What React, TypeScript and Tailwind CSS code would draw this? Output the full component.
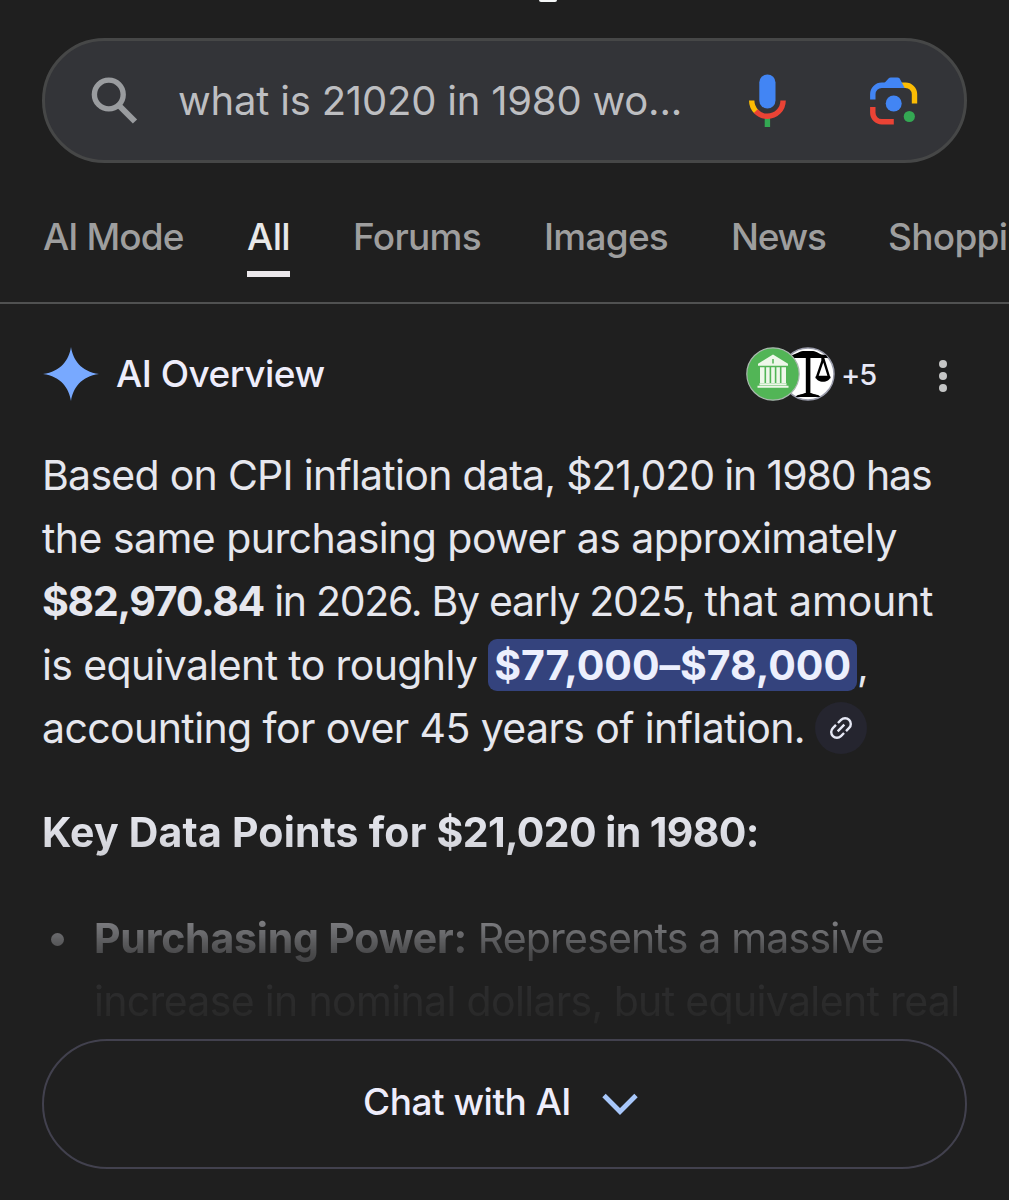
import React from 'react';

const TABS = [
    { label: 'AI Mode', className: 'w-[141px] tracking-[-0.9px]' },
    { label: 'All', className: 'w-[43px] tracking-[-0.6px]', active: true },
    { label: 'Forums', className: 'w-[128px] tracking-[-0.7px]' },
    { label: 'Images', className: 'w-[124px] tracking-[-0.75px]' },
    { label: 'News', className: 'w-[94px] tracking-[-1.3px]' },
    { label: 'Shopping', className: 'tracking-[-0.7px]' },
];

const SearchIcon: React.FC = () => (
    <svg className="h-12 w-12 shrink-0" viewBox="0 0 48 48" fill="none" stroke="#9a9c9f">
        <circle cx="18.8" cy="17.5" r="14.4" strokeWidth="5.4" />
        <path d="M28.5 28 45 44.5" strokeWidth="6" />
    </svg>
);

const MicIcon: React.FC = () => (
    <svg className="h-[54px] w-[38px] shrink-0" viewBox="0 0 38 54" fill="none">
        <rect x="11.3" y="0.5" width="16.2" height="34" rx="8.1" fill="#4285f4" />
        <path d="M19.4 44v9" stroke="#34a853" strokeWidth="5.4" />
        <path d="M3.7 26.500c0 4.600 1.800 8.300 4.600 11.100" stroke="#fbbc04" strokeWidth="5.4" />
        <path d="M7.800 37.100c3 3.200 7 5.200 11.600 5.200 8.700 0 15.700-7 15.700-15.800" stroke="#ea4335" strokeWidth="5.4" />
    </svg>
);

const LensIcon: React.FC = () => (
    <svg className="h-12 w-12 shrink-0" viewBox="0 0 48 48" fill="none">
        <path d="M30 8.300h5.500a9 9 0 0 1 9 9v9.200" stroke="#fbbc04" strokeWidth="5.4" />
        <path d="M2.800 22.500v-5.200a9 9 0 0 1 9-9H31" stroke="#4285f4" strokeWidth="5.4" />
        <path d="M13.500 7 18.500 1.500Q19.400.500 20.800.500h6.600q1.400 0 2.300 1L34.700 11H14Z" fill="#4285f4" />
        <path d="M2.800 30v5.700a9 9 0 0 0 9 9h12" stroke="#ea4335" strokeWidth="5.4" />
        <circle cx="23.7" cy="26.5" r="8" fill="#4285f4" />
        <circle cx="39.3" cy="39.5" r="5.6" fill="#34a853" />
    </svg>
);

const SparkIcon: React.FC = () => (
    <svg className="h-[54px] w-[56px] shrink-0" viewBox="0 0 56 54">
        <path
            d="M28 0C30 13 38 24.500 56 27 38 29.500 30 41 28 54 26 41 18 29.500 0 27 18 24.500 26 13 28 0Z"
            fill="#78a9ff"
        />
    </svg>
);

const BankLogo: React.FC = () => (
    <svg className="h-[54px] w-[54px]" viewBox="0 0 54 54">
        <circle cx="27" cy="27" r="26.2" fill="#52b556" stroke="#a9b8ae" strokeWidth="1.2" />
        <g fill="#eef7e9">
            <path d="M12 16.800 27 7.500l15 9.300v2H12z" />
            <path d="M14 20.300h4.500V36H14zM20.100 20.300h3.500V36h-3.500zM25.200 20.300h3.600V36h-3.600zM30.400 20.300h3.500V36h-3.500zM35.500 20.300H40V36h-4.500z" />
            <path d="M13.500 36.300h27v2h-27zM11.500 38.700h31v2h-31z" />
        </g>
        <path d="M27 12v4.500" stroke="#52b556" strokeWidth="1.5" />
    </svg>
);

const ScalesLogo: React.FC = () => (
    <svg className="h-[54px] w-[54px]" viewBox="0 0 54 54">
        <circle cx="27" cy="27" r="26" fill="#fff" stroke="#9a9cab" strokeWidth="1.5" />
        <path d="M8 8.500C14 8.500 18 4 22 4h10c4 0 7 4.500 13 4l2 3H8z" fill="#000" />
        <path d="M24.800 9h4.600v38h-4.600z" fill="#000" />
        <path d="M15 50c0-2.500 6-2.500 9-4h6c3 1.500 9 1.500 9 4z" fill="#000" />
        <path d="M41.500 9v5L36 30h12z" fill="none" stroke="#000" strokeWidth="2.4" />
        <path d="M34.500 29.500h15c-1 7-14 7-15 0z" fill="#000" />
    </svg>
);

const LinkIcon: React.FC = () => (
    <svg className="h-[28px] w-[28px] -rotate-45" viewBox="0 0 28 28" fill="none" stroke="#e6e8f5" strokeWidth="2.4">
        <path d="M12.600 8.300H8.200a5.700 5.700 0 0 0 0 11.400h4.400M15.400 8.300h4.400a5.700 5.700 0 0 1 0 11.400h-4.400M9.300 14h9.400" />
    </svg>
);

const SearchBar: React.FC = () => (
    <div className="mx-[42px] mt-9 flex h-[125px] items-center rounded-full border-[3px] border-[#464747] bg-[#333438] pr-[46px] pl-[45px]">
        <SearchIcon />
        <span className="ml-[40px] flex-1 pt-px text-[40px] whitespace-nowrap tracking-[-0.2px] text-[#bdbec1]">
            what is 21020 in 1980 wo...
        </span>
        <MicIcon />
        <div className="ml-[84px]">
            <LensIcon />
        </div>
    </div>
);

const Tabs: React.FC = () => (
    <nav className="mt-[48px] flex h-[93px] gap-[63px] overflow-hidden border-b-2 border-[#505151] pl-[43px]">
        {TABS.map((tab) => (
            <div key={tab.label} className="flex shrink-0 flex-col">
                <span
                    className={`${tab.className} ${tab.active ? 'text-[#e8e8e8]' : 'text-[#9e9e9e]'} h-[60px] text-[37px] leading-[51px] font-medium whitespace-nowrap`}
                >
                    {tab.label}
                </span>
                {tab.active && <span className="h-1.5 bg-[#ece8ec]"></span>}
            </div>
        ))}
    </nav>
);

const OverviewHeader: React.FC = () => (
    <div className="mt-[42px] flex h-[56px] items-center pr-[62px] pl-[43px]">
        <SparkIcon />
        <h2 className="ml-[17px] flex-1 text-[37px] leading-[52px] font-medium tracking-[-0.5px] text-[#eeedfb]">AI Overview</h2>
        <div className="flex items-center">
            <div className="z-10 -mr-[19px]">
                <BankLogo />
            </div>
            <ScalesLogo />
            <span className="ml-1.5 w-[36px] pt-0.5 text-[29px] font-medium tracking-[-1.2px] text-[#e8e8f6]">+5</span>
        </div>
        <div className="ml-[62px] flex flex-col gap-1 pt-[3px]">
            <span className="h-2 w-2 rounded-full bg-[#c4c5c5]"></span>
            <span className="h-2 w-2 rounded-full bg-[#c4c5c5]"></span>
            <span className="h-2 w-2 rounded-full bg-[#c4c5c5]"></span>
        </div>
    </div>
);

const Summary: React.FC = () => (
    <div className="mt-[42px] pl-[42px] text-[41px] leading-[63.2px] whitespace-nowrap text-[#e6e7ee]">
        <div className="tracking-[-0.89px]">
            <span className="tracking-[-0.72px]">Based on CPI inflation data, </span>
            <span className="tracking-[-1.12px]">$21,020 in 1980 has</span>
        </div>
        <div className="tracking-[-0.55px]">the same purchasing power as approximately</div>
        <div className="tracking-[-0.89px]">
            <b className="tracking-[-1.3px]">$82,970.84</b>
            <span className="tracking-[-1.3px]"> in 2026. By early 2025, </span>
            <span className="tracking-[-0.2px]">that amount</span>
        </div>
        <div className="tracking-[-0.63px]">
            is equivalent to roughly{' '}
            <b className="rounded-[9px] bg-[#34437d] px-1.5 py-px tracking-[-0.05px] text-[#eceffd]">$77,000–$78,000</b>,
        </div>
        <div className="flex items-center tracking-[-0.6px]">
            accounting for over 45 years of inflation.
            <span className="ml-[10px] flex h-[52px] w-[52px] items-center justify-center rounded-full bg-[#25252f]">
                <LinkIcon />
            </span>
        </div>
    </div>
);

const KeyPoints: React.FC = () => (
    <div className="mt-[41px] mask-[linear-gradient(to_bottom,#000_15px,rgba(0,0,0,0.9)_50px,rgba(0,0,0,0.46)_122px,rgba(0,0,0,0.22)_152px,rgba(0,0,0,0.07)_186px,rgba(0,0,0,0.04)_230px)] text-[41px] leading-[63px] whitespace-nowrap text-[#e6e7ee]">
        <h3 className="pl-[42px] font-bold">
            <span className="tracking-[0.2px]">Key Data Points for </span>
            <span className="tracking-[-0.62px]">$21,020 in 1980:</span>
        </h3>
        <div className="mt-[43px] flex pl-[51px]">
            <span className="mt-[26px] h-[13px] w-[13px] rounded-full bg-[#e6e7ee]"></span>
            <div className="ml-[30px] tracking-[-0.66px]">
                <div>
                    <b className="tracking-[-0.2px]">Purchasing Power:</b>
                    <span className="tracking-[-0.8px]"> Represents a massive</span>
                </div>
                <div>increase in nominal dollars, but equivalent real</div>
            </div>
        </div>
    </div>
);

const App: React.FC = () => (
    <div className="h-[1200px] w-full overflow-hidden bg-[#1f1f1f] font-['Inter',sans-serif]">
        <div className="ml-[539px] h-0.5 w-[18px] rounded-b-full bg-[#f4f6f6]"></div>
        <SearchBar />
        <Tabs />
        <OverviewHeader />
        <Summary />
        <KeyPoints />
        <button className="mx-[42px] mt-[6px] flex h-[130px] w-[925px] items-center justify-center rounded-full border-2 border-[#42414e] pr-2 text-[37px] font-medium tracking-[-0.5px] text-[#eeedfb]">
            <span className="pb-[4px]">Chat with AI</span>
            <svg className="ml-[31px] h-[22px] w-[36px]" viewBox="0 0 36 22" fill="none">
                <path d="M2 2.500 18 18.500 34 2.500" stroke="#a8c7fa" strokeWidth="4.8" />
            </svg>
        </button>
    </div>
);

export default App;
